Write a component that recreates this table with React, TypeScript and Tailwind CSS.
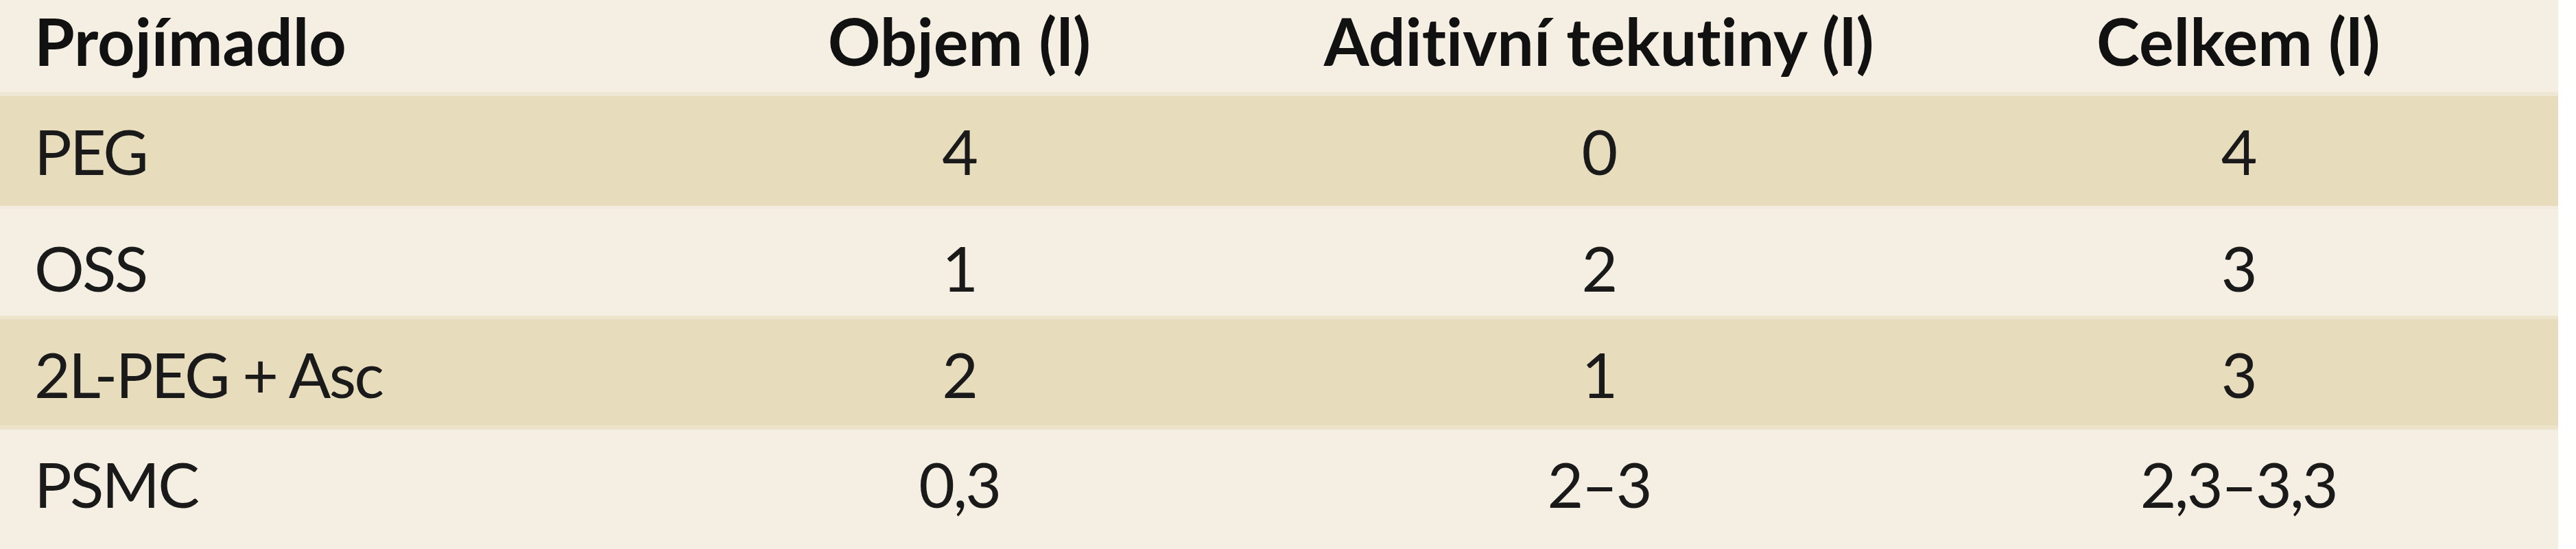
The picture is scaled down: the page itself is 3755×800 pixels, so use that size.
const rows = [
  { name: "PEG", a: "4", b: "0", c: "4", bg: "bg-[#e7dcbc]", cls: "h-[160px] pt-[34px]" },
  { name: "OSS", a: "1", b: "2", c: "3", bg: "bg-[#f4efe2]", cls: "h-[160px] pt-[39px] border-t-[5px] border-[#f3ecde]" },
  { name: "2L-PEG + Asc", a: "2", b: "1", c: "3", bg: "bg-[#e7dcbc]", cls: "h-[160px] pt-[34px] border-t-[5px] border-[#ede5cb]" },
  { name: "PSMC", a: "0,3", b: "2–3", c: "2,3–3,3", bg: "bg-[#f4efe2]", cls: "h-[180px] pt-[33px] border-t-[6px] border-[#ece3c9]" },
];

export default function App() {
  return (
    <div className="w-[3755px] h-[800px] bg-white overflow-hidden [font-variant-ligatures:none]" style={{ fontFamily: "Lato, 'Open Sans', sans-serif" }}>
      <div className="w-[3729px] flex flex-col text-[#111]">
        <div className="grid grid-cols-4 h-[140px] bg-[#f4efe2] border-b-[6px] border-[#eee7d4] pt-[12px] font-bold text-[95px] leading-none">
          <div className="pl-[50px]">Projímadlo</div>
          <div className="text-center">Objem (l)</div>
          <div className="text-center">Aditivní tekutiny (l)</div>
          <div className="text-center">Celkem (l)</div>
        </div>
        {rows.map((r) => (
          <div key={r.name} className={`grid grid-cols-4 ${r.bg} ${r.cls} text-[91px] leading-none tracking-[-0.03em] text-[#1a1a1a]`}>
            <div className="pl-[50px]">{r.name}</div>
            <div className="text-center">{r.a}</div>
            <div className="text-center">{r.b}</div>
            <div className="text-center">{r.c}</div>
          </div>
        ))}
      </div>
    </div>
  );
}
